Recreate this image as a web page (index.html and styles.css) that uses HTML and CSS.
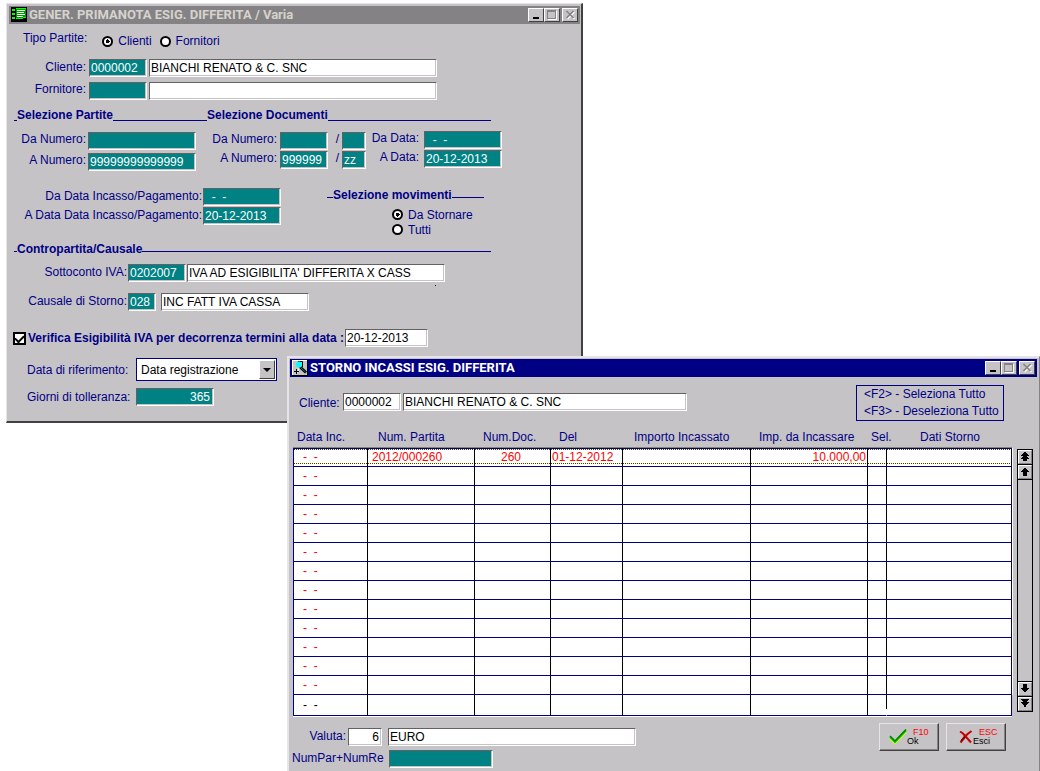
FILE: index.html
```html
<!DOCTYPE html>
<html lang="it">
<head>
<meta charset="utf-8">
<title>Gener. Primanota Esig. Differita</title>
<link rel="stylesheet" href="styles.css">
</head>
<body>
<main class="desktop">

<section class="window window-main" aria-label="Gener. Primanota">
  <header class="titlebar titlebar-inactive">
    <svg class="title-icon" viewBox="0 0 16 16" shape-rendering="crispEdges" aria-hidden="true">
      <path d="M0 0h16v15H0z" fill="#000"/>
      <path d="M5 1h10v10H5z" fill="#009a00"/>
      <path d="M1 2h3v2H1zM1 6h3v2H1zM1 10h3v2H1z" fill="#0f0"/>
      <path d="M6 3h8v1H6zM6 5h7v1H6zM6 7h8v1H6zM6 9h6v1H6z" fill="#fff"/>
      <path d="M5 1h10v1H5zM5 11h7v1H5zM12 10h3v1h-3z" fill="#0f0"/>
    </svg>
    <h1 class="title">GENER. PRIMANOTA ESIG. DIFFERITA / Varia</h1>
    <div class="controls">
      <button class="control" aria-label="Riduci"><svg viewBox="0 0 14 12" shape-rendering="crispEdges"><path d="M4 8h6v2H4z" fill="#000"/></svg></button>
      <button class="control" aria-label="Ingrandisci"><svg viewBox="0 0 14 12" shape-rendering="crispEdges"><path d="M2.500 1.500h8v8h-8zM3 2.500h8" fill="none" stroke="#848284"/><path d="M3 10.500h8.500V2" fill="none" stroke="#fff"/></svg></button>
      <button class="control control-close" aria-label="Chiudi"><svg viewBox="0 0 14 12"><path d="M4.500 3l7 7m0-7l-7 7" stroke="#fff" stroke-width="1.500"/><path d="M3.500 2l7 7m0-7l-7 7" stroke="#848284" stroke-width="1.700"/></svg></button>
    </div>
  </header>

  <form class="body-main">
    <div class="type-row">
      <span class="label">Tipo Partite:</span>
      <div class="type-options">
        <label class="option"><input class="radio" type="radio" name="tipo" checked>Clienti</label>
        <label class="option"><input class="radio" type="radio" name="tipo">Fornitori</label>
      </div>
    </div>

    <div class="row row-party">
      <label class="label" for="cliente">Cliente:</label>
      <input class="field teal w-code" id="cliente" value="0000002">
      <input class="field w-name" aria-label="Nome cliente" value="BIANCHI RENATO &amp; C. SNC">
    </div>
    <div class="row row-party row-supplier">
      <label class="label" for="fornitore">Fornitore:</label>
      <input class="field teal w-code" id="fornitore">
      <input class="field w-name" aria-label="Nome fornitore">
    </div>

    <div class="heading heading-selection">
      <span class="rule rule-start"></span>
      <h2 class="heading-text">Selezione Partite</h2>
      <span class="rule rule-partite"></span>
      <h2 class="heading-text">Selezione Documenti</h2>
      <span class="rule rule-fill"></span>
    </div>

    <div class="selection">
      <div class="group group-partite">
        <label class="label" for="pda">Da Numero:</label><input class="field teal" id="pda">
        <label class="label" for="pa">A Numero:</label><input class="field teal" id="pa" value="99999999999999">
      </div>
      <div class="group group-docs">
        <label class="label" for="dda">Da Numero:</label><input class="field teal" id="dda"><span class="label slash">/</span><input class="field teal" aria-label="Da serie">
        <label class="label" for="da">A Numero:</label><input class="field teal" id="da" value="999999"><span class="label slash">/</span><input class="field teal" aria-label="A serie" value="zz">
      </div>
      <div class="group group-dates">
        <label class="label" for="dtda">Da Data:</label><input class="field teal" id="dtda" value="  -  -">
        <label class="label" for="dta">A Data:</label><input class="field teal" id="dta" value="20-12-2013">
      </div>
    </div>

    <div class="movements">
      <div class="group group-collect">
        <label class="label" for="ida">Da Data Incasso/Pagamento:</label><input class="field teal" id="ida" value="  -  -">
        <label class="label" for="ia">A Data Data Incasso/Pagamento:</label><input class="field teal" id="ia" value="20-12-2013">
      </div>
      <div class="movement-types">
        <div class="heading heading-mid">
          <span class="rule rule-lead"></span>
          <h2 class="heading-text">Selezione movimenti</h2>
          <span class="rule rule-fill"></span>
        </div>
        <div class="movement-options">
          <label class="option"><input class="radio" type="radio" name="mov" checked>Da Stornare</label>
          <label class="option"><input class="radio" type="radio" name="mov">Tutti</label>
        </div>
      </div>
    </div>

    <div class="heading heading-mid heading-account">
      <span class="rule rule-start"></span>
      <h2 class="heading-text">Contropartita/Causale</h2>
      <span class="rule rule-fill"></span>
    </div>

    <div class="row row-account">
      <label class="label" for="sotto">Sottoconto IVA:</label>
      <input class="field teal w-code" id="sotto" value="0202007">
      <input class="field w-account" aria-label="Descrizione sottoconto" value="IVA AD ESIGIBILITA' DIFFERITA X CASS">
      <span class="speck"></span>
    </div>
    <div class="row row-account row-cause">
      <label class="label" for="causale">Causale di Storno:</label>
      <input class="field teal w-cause" id="causale" value="028">
      <input class="field w-cause-name" aria-label="Descrizione causale" value="INC FATT IVA CASSA">
    </div>

    <div class="verify">
      <input class="check" type="checkbox" id="verifica" checked>
      <label class="verify-label" for="verifica">Verifica Esigibilità IVA per decorrenza termini alla data :</label>
      <input class="field w-date" aria-label="Data verifica" value="20-12-2013">
    </div>

    <div class="reference">
      <label class="label" for="rif">Data di riferimento:</label>
      <div class="select-box">
        <select class="select" id="rif"><option>Data registrazione</option></select>
        <span class="select-arrow"></span>
      </div>
    </div>
    <div class="reference reference-days">
      <label class="label" for="giorni">Giorni di tolleranza:</label>
      <input class="field teal w-days" id="giorni" value="365">
    </div>
  </form>
</section>

<section class="window window-detail" aria-label="Storno incassi">
  <header class="titlebar">
    <svg class="title-icon" viewBox="0 0 16 16" aria-hidden="true">
      <path d="M0 0h16v16H0z" fill="#000"/>
      <path d="M0 0h15v15H0z" fill="#fff"/>
      <path d="M1 1h14v14H1z" fill="#c6c3c6"/>
      <path d="M8 7l6 5.500" stroke="#000" stroke-width="3"/>
      <path d="M8.500 7.500l5 4.500" stroke="#008284"/>
      <path d="M7 8l-1.500 4.500" stroke="#fff" stroke-width="1"/>
      <path d="M6 1.500h4.500v5.500" stroke="#000" fill="none"/>
      <circle cx="7" cy="4.500" r="3" fill="#0ff"/>
      <path d="M4.500 9v5M2 11.500h5" stroke="#000" shape-rendering="crispEdges"/>
    </svg>
    <h1 class="title">STORNO INCASSI ESIG. DIFFERITA</h1>
    <div class="controls">
      <button class="control" aria-label="Riduci"><svg viewBox="0 0 14 12" shape-rendering="crispEdges"><path d="M4 8h6v2H4z" fill="#000"/></svg></button>
      <button class="control" aria-label="Ingrandisci"><svg viewBox="0 0 14 12" shape-rendering="crispEdges"><path d="M2.500 1.500h8v8h-8zM3 2.500h8" fill="none" stroke="#848284"/><path d="M3 10.500h8.500V2" fill="none" stroke="#fff"/></svg></button>
      <button class="control control-close" aria-label="Chiudi"><svg viewBox="0 0 14 12"><path d="M4.500 3l7 7m0-7l-7 7" stroke="#fff" stroke-width="1.500"/><path d="M3.500 2l7 7m0-7l-7 7" stroke="#848284" stroke-width="1.700"/></svg></button>
    </div>
  </header>

  <div class="detail-top">
    <div class="row row-customer">
      <label class="label" for="cli2">Cliente:</label>
      <input class="field w-code" id="cli2" value="0000002">
      <input class="field w-name2" aria-label="Nome cliente storno" value="BIANCHI RENATO &amp; C. SNC">
    </div>
    <div class="shortcuts">
      <div>&lt;F2&gt; - Seleziona Tutto</div>
      <div>&lt;F3&gt; - Deseleziona Tutto</div>
    </div>
  </div>

  <div class="grid-area">
    <div class="grid-box">
    <table class="grid">
      <colgroup><col class="c-date"><col class="c-part"><col class="c-doc"><col class="c-del"><col class="c-amount"><col class="c-due"><col class="c-sel"><col></colgroup>
      <thead>
        <tr><th>Data Inc.</th><th>Num. Partita</th><th>Num.Doc.</th><th>Del</th><th>Importo Incassato</th><th>Imp. da Incassare</th><th>Sel.</th><th>Dati Storno</th></tr>
      </thead>
      <tbody>
        <tr><td>-  -</td><td>2012/000260</td><td>260</td><td>01-12-2012</td><td></td><td>10.000,00</td><td></td><td></td></tr>
        <tr><td>-  -</td><td></td><td></td><td></td><td></td><td></td><td></td><td></td></tr>
        <tr><td>-  -</td><td></td><td></td><td></td><td></td><td></td><td></td><td></td></tr>
        <tr><td>-  -</td><td></td><td></td><td></td><td></td><td></td><td></td><td></td></tr>
        <tr><td>-  -</td><td></td><td></td><td></td><td></td><td></td><td></td><td></td></tr>
        <tr><td>-  -</td><td></td><td></td><td></td><td></td><td></td><td></td><td></td></tr>
        <tr><td>-  -</td><td></td><td></td><td></td><td></td><td></td><td></td><td></td></tr>
        <tr><td>-  -</td><td></td><td></td><td></td><td></td><td></td><td></td><td></td></tr>
        <tr><td>-  -</td><td></td><td></td><td></td><td></td><td></td><td></td><td></td></tr>
        <tr><td>-  -</td><td></td><td></td><td></td><td></td><td></td><td></td><td></td></tr>
        <tr><td>-  -</td><td></td><td></td><td></td><td></td><td></td><td></td><td></td></tr>
        <tr><td>-  -</td><td></td><td></td><td></td><td></td><td></td><td></td><td></td></tr>
        <tr><td>-  -</td><td></td><td></td><td></td><td></td><td></td><td></td><td></td></tr>
        <tr><td>-  -</td><td></td><td></td><td></td><td></td><td></td><td></td><td></td></tr>
      </tbody>
    </table>
    </div>
    <div class="scroller">
      <button class="scroll-btn" aria-label="Inizio"><svg viewBox="0 0 12 12" shape-rendering="crispEdges"><path d="M5 1h2v1h1v1h1v1h1v1H8v1h1v1h1v1H8v2H4V8H2V7h1V6h1V5H2V4h1V3h1V2h1z"/></svg></button>
      <button class="scroll-btn" aria-label="Su"><svg viewBox="0 0 12 12" shape-rendering="crispEdges"><path d="M5 2h2v1h1v1h1v1h1v1H8v4H4V6H2V5h1V4h1V3h1z"/></svg></button>
      <span class="scroll-track"></span>
      <button class="scroll-btn" aria-label="Giù"><svg viewBox="0 0 12 12" shape-rendering="crispEdges"><path d="M4 1h4v4h2v1H9v1H8v1H7v1H5V8H4V7H3V6H2V5h2z"/></svg></button>
      <button class="scroll-btn" aria-label="Fine"><svg viewBox="0 0 12 12" shape-rendering="crispEdges"><path d="M2 1h8v1H9v1H8v1h2v1H9v1H8v1H7v2H5V7H4V6H3V5H2V4h2V3H3V2H2z"/></svg></button>
    </div>
  </div>

  <footer class="detail-foot">
    <div class="foot-fields">
      <div class="row row-currency">
        <label class="label" for="valuta">Valuta:</label>
        <input class="field w-currency" id="valuta" value="6">
        <input class="field w-currency-name" aria-label="Nome valuta" value="EURO">
      </div>
      <div class="row row-numpar">
        <label class="label" for="numpar">NumPar+NumRe</label>
        <input class="field teal w-numpar" id="numpar">
      </div>
    </div>
    <div class="actions">
      <button class="action">
        <svg class="action-icon" viewBox="0 0 18 16" aria-hidden="true"><path d="M1 9l5 5L17 2.500" fill="none" stroke="#ff0" stroke-width="2"/><path d="M1 8l5 5L17 1.500" fill="none" stroke="#0c0" stroke-width="2"/><path d="M1 7l5 5L17 .5" fill="none" stroke="#008200" stroke-width="1.500"/></svg>
        <span class="action-text"><span class="key">F10</span><span>Ok</span></span>
      </button>
      <button class="action action-exit">
        <svg class="action-icon exit-icon" viewBox="0 0 14 14" aria-hidden="true"><path d="M1 1.500l3 2 8 9M12.500 1L8 4.500 1.500 12.500" fill="none" stroke="#c60000" stroke-width="2"/><path d="M2 11l4-5" stroke="#840000" stroke-width="1.500"/></svg>
        <span class="action-text"><span class="key">ESC</span><span>Esci</span></span>
      </button>
    </div>
  </footer>
</section>

</main>
</body>
</html>
```

FILE: styles.css
```css
* { box-sizing: border-box; }

body {
  margin: 0;
  background: #fff;
  color: #000084;
  font: 12px/14px "Liberation Sans", Arial, sans-serif;
}

input, select, button { font: inherit; margin: 0; padding: 0; border-radius: 0; }
h1, h2 { margin: 0; font-size: 12px; line-height: 14px; font-weight: bold; }

.desktop { position: relative; min-height: 100vh; overflow: hidden; }

/* Windows */
.window { position: absolute; background: #c6c3c6; padding: 2px; border: 1px solid #e7e3e7; }
.window-main { left: 6px; top: 3px; width: 577px; border-right: 2px solid #424142; border-bottom: 2px solid #424142; padding-right: 1px; padding-bottom: 15px; }
.window-detail { left: 287px; right: 0; top: 356px; bottom: 0; border-bottom: 0; border-right-color: #848284; padding-bottom: 0; box-shadow: inset 1px 1px #e7e3e7; }

.titlebar { display: flex; align-items: center; height: 18px; padding: 0 2px; background: #000084; color: #fff; }
.titlebar-inactive { background: #848284; color: #d6d3ce; }
.title-icon { width: 16px; height: 16px; flex: none; }
.title { flex: 1; padding-left: 2px; white-space: nowrap; font-family: Roboto, "Liberation Sans", sans-serif; font-size: 13px; }
.controls { display: flex; }
.control { width: 16px; height: 14px; background: #c6c3c6; border: 1px solid; border-color: #fff #424142 #424142 #fff; }
.control svg { display: block; width: 14px; height: 12px; }
.control-close { margin-left: 2px; }

/* Fields */
.row { display: flex; align-items: flex-start; }
.label { line-height: 16px; white-space: nowrap; }
.field {
  height: 18px;
  min-width: 0;
  padding: 0 1px;
  color: #000;
  background: #fff;
  border: 1px solid;
  border-color: #636163 #fff #fff #636163;
  outline: none;
  box-shadow: inset -1px -1px #c6c3c6;
}
.teal { background: #008284; color: #fff; }
.w-code { width: 58px; }
.w-name { width: 288px; }
.w-account { width: 258px; }
.w-cause { width: 28px; }
.w-cause-name { width: 148px; }
.w-date { width: 83px; }
.w-days { width: 78px; padding-right: 3px; text-align: right; }
.w-name2 { width: 284px; }
.w-currency { width: 34px; padding-right: 2px; text-align: right; }
.w-currency-name { width: 248px; }
.w-numpar { width: 104px; }

.option { display: flex; align-items: center; gap: 5px; white-space: nowrap; }
.radio {
  appearance: none;
  width: 11px;
  height: 11px;
  border: 2px solid #000;
  border-radius: 50%;
  background: #fff;
}
.radio:checked { background: radial-gradient(circle, #000 0 2px, #fff 2px); }

/* Selection form */
.type-row { display: flex; align-items: flex-start; gap: 15px; padding: 7px 0 0 14px; }
.type-row .label { line-height: 14px; }
.type-options { display: flex; gap: 8px; padding-top: 3px; }
.row-party { margin-top: 11px; }
.row-party .label { width: 77px; margin-right: 3px; text-align: right; }
.row-party .w-name { margin-left: 2px; }
.row-supplier { margin-top: 5px; }
.row-supplier .label { line-height: 14px; }

.heading { display: flex; align-items: flex-end; }
.heading-text { white-space: nowrap; }
.rule { height: 1px; margin-bottom: 1px; background: #000084; }
.rule-start { width: 3px; }
.rule-lead { width: 6px; }
.rule-partite { width: 94px; }
.rule-fill { flex: 1; }
.heading-mid .rule { margin-bottom: 4px; }
.heading-selection, .heading-account { width: 477px; margin-left: 5px; }
.heading-selection { margin-top: 8px; }
.heading-account { margin-top: 5px; }

.group { display: grid; grid-auto-rows: 18px; row-gap: 1px; text-align: right; }
.selection { display: flex; align-items: flex-start; margin-top: 9px; }
.selection .label { line-height: 14px; }
.group-partite { grid-template-columns: 77px 108px; column-gap: 2px; row-gap: 3px; padding-top: 1px; }
.group-docs { grid-template-columns: 81px 48px 8px 24px; column-gap: 3px; padding-top: 1px; }
.group-dates { grid-template-columns: 53px 78px; column-gap: 5px; }

.movements { display: flex; align-items: flex-start; margin-top: 17px; }
.group-collect { grid-template-columns: 193px 78px; column-gap: 1px; }
.movement-types { width: 157px; margin-left: 46px; }
.movement-options { padding: 5px 0 0 65px; }
.movement-options .option { height: 15px; }

.row-account { position: relative; margin-top: 8px; }
.row-account .label { width: 118px; margin-right: 1px; text-align: right; }
.row-account .w-account { margin-left: 1px; }
.row-cause { margin-top: 11px; }
.row-account .w-cause-name { margin-left: 5px; }
.speck { position: absolute; left: 426px; top: 21px; width: 1px; height: 1px; background: #000; }

.verify { display: flex; align-items: center; margin-top: 18px; padding-left: 4px; }
.check {
  appearance: none;
  width: 13px;
  height: 13px;
  border: 2px solid #000;
  background: #fff;
  display: grid;
  place-items: center;
}
.check:checked::before {
  content: "";
  width: 7px;
  height: 4px;
  border: solid #000;
  border-width: 0 0 2px 2px;
  transform: rotate(-45deg);
}
.verify-label { width: 317px; margin-left: 2px; font-weight: bold; white-space: nowrap; }

.reference { display: flex; align-items: center; margin-top: 11px; padding-left: 18px; }
.reference .label { width: 109px; }
.reference-days { margin-top: 7px; }
.select-box { position: relative; width: 141px; }
.select {
  appearance: none;
  display: block;
  width: 100%;
  height: 23px;
  padding-left: 4px;
  border: 1px solid #000084;
  background: #fff;
  color: #000;
}
.select-arrow {
  position: absolute;
  top: 2px;
  right: 2px;
  width: 16px;
  height: 19px;
  background: #c6c3c6;
  border: 1px solid;
  border-color: #fff #424142 #424142 #fff;
  display: grid;
  place-items: center;
  pointer-events: none;
}
.select-arrow::before { content: ""; border: 4px solid transparent; border-top-color: #000; border-bottom: 0; }

/* Detail window */
.detail-top { display: flex; justify-content: space-between; align-items: flex-start; padding: 8px 33px 0 9px; }
.row-customer { margin-top: 8px; }
.row-customer .label { width: 44px; line-height: 20px; }
.row-customer .w-name2 { margin-left: 2px; }
.shortcuts { width: 148px; height: 36px; padding-left: 7px; border: 1px solid #000084; line-height: 17px; white-space: nowrap; }

.grid-area { display: flex; gap: 5px; padding: 8px 4px 0 3px; }
.grid-box { flex: 1; min-width: 0; }
.grid { width: 100%; table-layout: fixed; border-spacing: 0; }
.c-date { width: 75px; }
.c-part { width: 107px; }
.c-doc { width: 76px; }
.c-del { width: 72px; }
.c-amount { width: 128px; }
.c-due { width: 117px; }
.c-sel { width: 19px; }
.grid th { height: 19px; padding: 1px 0 0 8px; font-weight: normal; text-align: left; vertical-align: top; white-space: nowrap; border-bottom: 1px solid #848284; }
.grid th:nth-child(1) { padding-left: 4px; }
.grid th:nth-child(2) { padding-left: 10px; }
.grid th:nth-child(5) { padding-left: 11px; }
.grid th:nth-child(7) { padding-left: 3px; }
.grid th:last-child { padding-left: 33px; }
.grid td {
  height: 19px;
  padding: 0 1px;
  background: #fff;
  color: #f00;
  white-space: pre;
  border-right: 1px solid #000;
  border-bottom: 1px solid #000084;
}
.grid td:first-child { padding-left: 9px; border-left: 1px solid #000084; }
.grid td:nth-child(2) { padding-left: 4px; }
.grid td:nth-child(3) { padding-right: 4px; text-align: center; }
.grid td:nth-child(6) { text-align: right; }
.grid td:last-child { border-right-color: #000084; box-shadow: 1px 0 #fff; }
.grid tbody tr:first-child td {
  padding-bottom: 1px;
  border-top: 1px solid #000084;
  background:
    repeating-linear-gradient(90deg, #424100 0 1px, #ffffc6 1px 2px) 0 0 / 100% 1px no-repeat,
    repeating-linear-gradient(90deg, #424100 0 1px, #ffffc6 1px 2px) 0 14px / 100% 1px no-repeat,
    #fff;
}
.grid tbody tr:last-child td { height: 21px; color: #000; box-shadow: 0 1px #fff; }
.grid tbody tr:last-child td:nth-child(7) {
  border-right-color: transparent;
  background: linear-gradient(#000, #000) right top / 1px 14px no-repeat border-box, #fff;
}

.scroller { display: flex; flex-direction: column; width: 16px; margin: 20px 0 4px; border: 1px solid #000; }
.scroll-btn { height: 14px; background: #c6c3c6; border: 1px solid; border-color: #fff #848284 #848284 #fff; }
.scroll-btn + .scroll-btn { margin-top: 1px; outline: 1px solid #000; }
.scroll-btn svg { display: block; width: 12px; height: 12px; }
.scroll-track { flex: 1; border: solid #000; border-width: 1px 0; }

.detail-foot { display: flex; justify-content: space-between; align-items: flex-start; padding: 0 31px 0 2px; }
.foot-fields { padding-top: 12px; }
.row-currency .label { width: 56px; padding-right: 2px; text-align: right; }
.row-currency .w-currency-name { margin-left: 6px; }
.row-numpar { margin-top: 4px; }
.row-numpar .label { width: 97px; }
.actions { display: flex; gap: 7px; padding-top: 7px; }
.action {
  display: flex;
  align-items: center;
  width: 60px;
  height: 28px;
  padding-left: 9px;
  background: #c6c3c6;
  border: 1px solid;
  border-color: #e7e3e7 #424142 #424142 #e7e3e7;
  box-shadow: inset -1px -1px #848284;
  color: #000;
  font-size: 9px;
  line-height: 9px;
}
.action-icon { width: 18px; height: 16px; flex: none; }
.action-exit { padding-left: 12px; }
.exit-icon { width: 14px; height: 14px; }
.action-text { display: flex; flex-direction: column; align-items: flex-start; }
.key { padding-left: 6px; color: #f00; }
```
